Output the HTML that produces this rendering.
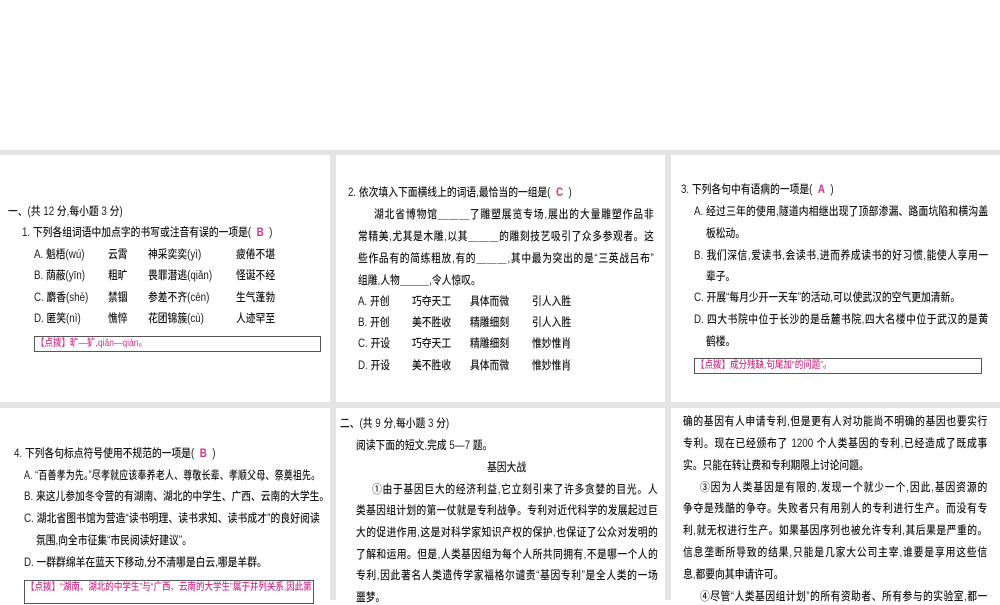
<!DOCTYPE html>
<html><head><meta charset="utf-8"><style>
*{margin:0;padding:0;box-sizing:border-box}
body{width:1000px;height:600px;overflow:hidden;background:#fff;position:relative;font-family:"Liberation Sans","Noto Sans CJK SC",sans-serif;color:#1a1a1a}
.bg{position:absolute;left:0;top:150px;width:1000px;height:450px;background:#e4e4e4}
.p{position:absolute;background:#fff}
.l{position:absolute;font-size:11.5px;line-height:14px;white-space:nowrap;font-weight:500;transform-origin:0 50%;transform:translateY(-7px) scaleX(.85)}
.j{text-align:justify;text-align-last:justify}
.pk{color:#d0308a;font-weight:bold}
.box{position:absolute;border:1px solid #555;}
.bt{position:absolute;font-size:10px;line-height:14px;color:#d0308a;white-space:nowrap;font-weight:500;transform-origin:0 0;transform:scaleX(.85)}
</style></head><body>
<div class="bg"></div>
<div class="p" style="left:0;top:155px;width:330px;height:247px"></div>
<div class="p" style="left:336px;top:155px;width:329px;height:247px"></div>
<div class="p" style="left:671px;top:155px;width:329px;height:247px"></div>
<div class="p" style="left:0;top:408px;width:330px;height:192px"></div>
<div class="p" style="left:336px;top:408px;width:329px;height:192px"></div>
<div class="p" style="left:671px;top:408px;width:329px;height:192px"></div>

<!-- panel 1 -->
<div class="l" style="left:8px;top:212px">一、(共 12 分,每小题 3 分)</div>
<div class="l" style="left:22px;top:233px">1. 下列各组词语中加点字的书写或注音有误的一项是(&nbsp; <span class="pk">B</span>&nbsp; )</div>
<div class="l" style="left:34px;top:255px">A. 魁梧(wú)</div><div class="l" style="left:108px;top:255px">云霄</div><div class="l" style="left:148px;top:255px">神采奕奕(yì)</div><div class="l" style="left:236px;top:255px">疲倦不堪</div>
<div class="l" style="left:34px;top:276px">B. 荫蔽(yīn)</div><div class="l" style="left:108px;top:276px">粗旷</div><div class="l" style="left:148px;top:276px">畏罪潜逃(qiǎn)</div><div class="l" style="left:236px;top:276px">怪诞不经</div>
<div class="l" style="left:34px;top:298px">C. 麝香(shè)</div><div class="l" style="left:108px;top:298px">禁锢</div><div class="l" style="left:148px;top:298px">参差不齐(cēn)</div><div class="l" style="left:236px;top:298px">生气蓬勃</div>
<div class="l" style="left:34px;top:319px">D. 匿笑(nì)</div><div class="l" style="left:108px;top:319px">憔悴</div><div class="l" style="left:148px;top:319px">花团锦簇(cù)</div><div class="l" style="left:236px;top:319px">人迹罕至</div>
<div class="box" style="left:34px;top:336px;width:287px;height:16px"></div><div class="bt" style="left:36px;top:337px">【点拨】旷—犷,qiǎn—qián。</div>

<!-- panel 2 -->
<div class="l" style="left:348px;top:193px">2. 依次填入下面横线上的词语,最恰当的一组是(&nbsp; <span class="pk">C</span>&nbsp; )</div>
<div class="l j" style="left:374px;top:215px;width:329px">湖北省博物馆＿＿＿了雕塑展览专场,展出的大量雕塑作品非</div>
<div class="l j" style="left:358px;top:237px;width:348px">常精美,尤其是木雕,以其＿＿＿的雕刻技艺吸引了众多参观者。这</div>
<div class="l j" style="left:358px;top:259px;width:348px">些作品有的简练粗放,有的＿＿＿,其中最为突出的是“三英战吕布”</div>
<div class="l" style="left:358px;top:281px">组雕,人物＿＿＿,令人惊叹。</div>
<div class="l" style="left:358px;top:302px">A. 开创</div><div class="l" style="left:412px;top:302px">巧夺天工</div><div class="l" style="left:470px;top:302px">具体而微</div><div class="l" style="left:532px;top:302px">引人入胜</div>
<div class="l" style="left:358px;top:323px">B. 开创</div><div class="l" style="left:412px;top:323px">美不胜收</div><div class="l" style="left:470px;top:323px">精雕细刻</div><div class="l" style="left:532px;top:323px">引人入胜</div>
<div class="l" style="left:358px;top:344px">C. 开设</div><div class="l" style="left:412px;top:344px">巧夺天工</div><div class="l" style="left:470px;top:344px">精雕细刻</div><div class="l" style="left:532px;top:344px">惟妙惟肖</div>
<div class="l" style="left:358px;top:366px">D. 开设</div><div class="l" style="left:412px;top:366px">美不胜收</div><div class="l" style="left:470px;top:366px">具体而微</div><div class="l" style="left:532px;top:366px">惟妙惟肖</div>

<!-- panel 3 -->
<div class="l" style="left:681px;top:190px">3. 下列各句中有语病的一项是(&nbsp; <span class="pk">A</span>&nbsp; )</div>
<div class="l j" style="left:694px;top:212px;width:346px">A. 经过三年的使用,隧道内相继出现了顶部渗漏、路面坑陷和横沟盖</div>
<div class="l" style="left:706px;top:234px">板松动。</div>
<div class="l j" style="left:694px;top:256px;width:346px">B. 我们深信,爱读书,会读书,进而养成读书的好习惯,能使人享用一</div>
<div class="l" style="left:706px;top:277px">辈子。</div>
<div class="l" style="left:694px;top:298px">C. 开展“每月少开一天车”的活动,可以使武汉的空气更加清新。</div>
<div class="l j" style="left:694px;top:320px;width:346px">D. 四大书院中位于长沙的是岳麓书院,四大名楼中位于武汉的是黄</div>
<div class="l" style="left:706px;top:342px">鹤楼。</div>
<div class="box" style="left:694px;top:358px;width:288px;height:16px"></div><div class="bt" style="left:696px;top:359px">【点拨】成分残缺,句尾加“的问题”。</div>

<!-- panel 4 -->
<div class="l" style="left:14px;top:454px">4. 下列各句标点符号使用不规范的一项是(&nbsp; <span class="pk">B</span>&nbsp; )</div>
<div class="l j" style="left:24px;top:476px;width:382px;transform:translateY(-7px) scaleX(.775)">A. “百善孝为先。”尽孝就应该奉养老人、尊敬长辈、孝顺父母、祭奠祖先。</div>
<div class="l j" style="left:24px;top:497px;width:348px">B. 来这儿参加冬令营的有湖南、湖北的中学生、广西、云南的大学生。</div>
<div class="l j" style="left:24px;top:519px;width:348px">C. 湖北省图书馆为营造“读书明理、读书求知、读书成才”的良好阅读</div>
<div class="l" style="left:36px;top:541px">氛围,向全市征集“市民阅读好建议”。</div>
<div class="l" style="left:24px;top:563px">D. 一群群绵羊在蓝天下移动,分不清哪是白云,哪是羊群。</div>
<div class="box" style="left:24px;top:580px;width:290px;height:24px"></div><div class="bt" style="left:26px;top:581px">【点拨】“湖南、湖北的中学生”与“广西、云南的大学生”属于并列关系,因此第</div>

<!-- panel 5 -->
<div class="l" style="left:340px;top:424px">二、(共 9 分,每小题 3 分)</div>
<div class="l" style="left:356px;top:446px">阅读下面的短文,完成 5—7 题。</div>
<div class="l" style="left:487px;top:468px">基因大战</div>
<div class="l j" style="left:372px;top:490px;width:336px">①由于基因巨大的经济利益,它立刻引来了许多贪婪的目光。人</div>
<div class="l j" style="left:356px;top:511px;width:355px">类基因组计划的第一仗就是专利战争。专利对近代科学的发展起过巨</div>
<div class="l j" style="left:356px;top:533px;width:355px">大的促进作用,这是对科学家知识产权的保护,也保证了公众对发明的</div>
<div class="l j" style="left:356px;top:555px;width:355px">了解和运用。但是,人类基因组为每个人所共同拥有,不是哪一个人的</div>
<div class="l j" style="left:356px;top:576px;width:355px">专利,因此著名人类遗传学家福格尔谴责“基因专利”是全人类的一场</div>
<div class="l" style="left:356px;top:598px">噩梦。</div>

<!-- panel 6 -->
<div class="l j" style="left:683px;top:422px;width:358px">确的基因有人申请专利,但是更有人对功能尚不明确的基因也要实行</div>
<div class="l j" style="left:683px;top:444px;width:358px">专利。现在已经颁布了 1200 个人类基因的专利,已经造成了既成事</div>
<div class="l" style="left:683px;top:466px">实。只能在转让费和专利期限上讨论问题。</div>
<div class="l j" style="left:700px;top:488px;width:338px">③因为人类基因是有限的,发现一个就少一个,因此,基因资源的</div>
<div class="l j" style="left:683px;top:509px;width:358px">争夺是残酷的争夺。失败者只有用别人的专利进行生产。而没有专</div>
<div class="l j" style="left:683px;top:531px;width:358px">利,就无权进行生产。如果基因序列也被允许专利,其后果是严重的。</div>
<div class="l j" style="left:683px;top:553px;width:358px">信息垄断所导致的结果,只能是几家大公司主宰,谁要是享用这些信</div>
<div class="l" style="left:683px;top:575px">息,都要向其申请许可。</div>
<div class="l j" style="left:700px;top:597px;width:338px">④尽管“人类基因组计划”的所有资助者、所有参与的实验室,都一</div>
</body></html>
